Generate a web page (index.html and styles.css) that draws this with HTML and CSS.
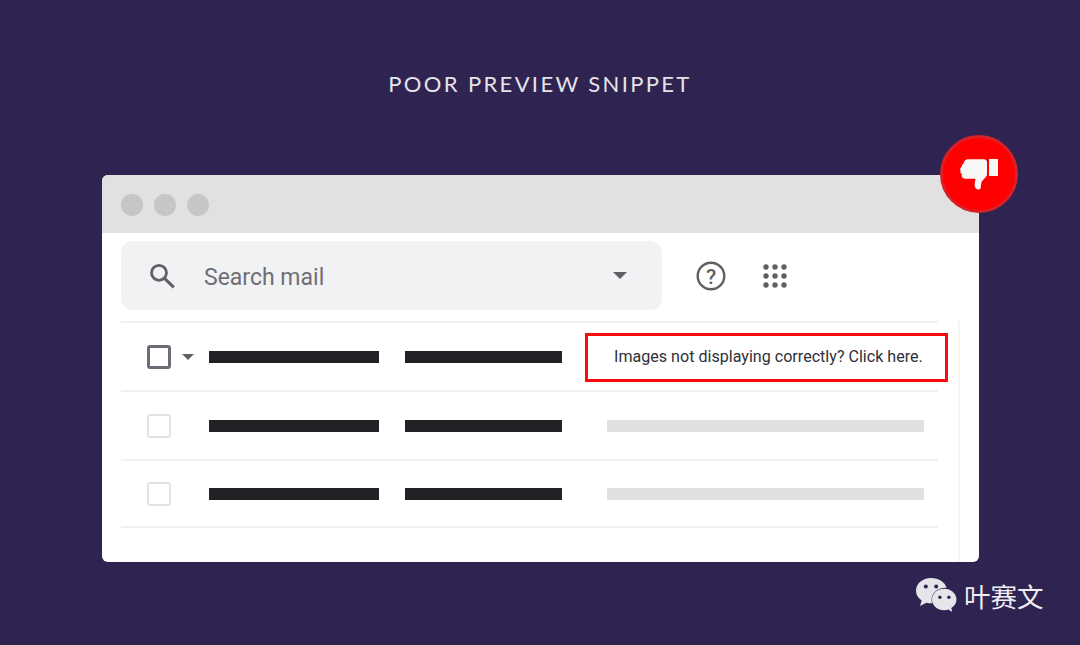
FILE: index.html
```html
<!DOCTYPE html>
<html lang="en">
<head>
<meta charset="utf-8">
<title>Poor preview snippet</title>
<link rel="stylesheet" href="styles.css">
</head>
<body>
<main class="stage">
  <h1 class="title">POOR PREVIEW SNIPPET</h1>
  <section class="window">
    <div class="titlebar">
      <span class="dot"></span><span class="dot"></span><span class="dot"></span>
    </div>
    <div class="toolbar">
      <div class="search">
        <svg class="search-icon" viewBox="0 0 26 26" width="26" height="26"><circle cx="10" cy="9.800" r="7.500" fill="none" stroke="#5f6066" stroke-width="2.800"/><path d="M15.500 15.300L24.800 24.300" stroke="#5f6066" stroke-width="3" fill="none"/></svg>
        <span class="search-text">Search mail</span>
        <span class="caret caret-search"></span>
      </div>
      <svg class="help" viewBox="0 0 30 30" width="30" height="30"><circle cx="15" cy="15" r="13.300" fill="none" stroke="#5f6066" stroke-width="2.400"/><text x="15" y="22.500" text-anchor="middle" class="help-mark">?</text></svg>
      <svg class="apps" viewBox="0 0 24 24" width="24" height="24" fill="#5f6066"><circle cx="3" cy="3" r="2.700"/><circle cx="12" cy="3" r="2.700"/><circle cx="21" cy="3" r="2.700"/><circle cx="3" cy="12" r="2.700"/><circle cx="12" cy="12" r="2.700"/><circle cx="21" cy="12" r="2.700"/><circle cx="3" cy="21" r="2.700"/><circle cx="12" cy="21" r="2.700"/><circle cx="21" cy="21" r="2.700"/></svg>
    </div>
    <div class="list">
      <div class="rows">
        <div class="row row-first">
          <span class="check check-dark"></span>
          <span class="caret caret-row"></span>
          <span class="bar bar-sender"></span>
          <span class="bar bar-subject"></span>
          <div class="callout">Images not displaying correctly? Click here.</div>
        </div>
        <div class="row">
          <span class="check"></span>
          <span class="bar bar-sender"></span>
          <span class="bar bar-subject"></span>
          <span class="bar-grey"></span>
        </div>
        <div class="row">
          <span class="check"></span>
          <span class="bar bar-sender"></span>
          <span class="bar bar-subject"></span>
          <span class="bar-grey"></span>
        </div>
      </div>
      <div class="side"></div>
    </div>
    <div class="badge">
      <svg viewBox="0 0 38 31" width="38" height="31" fill="#f7f7f8"><path d="M8 .3h15.500c2.200 0 3.500 1.200 3.500 3v12.200c0 1-.4 1.800-1.200 2.600l-4.300 4.600-.8 6c-.2 1.500-1.500 2.100-2.800 1.700-2.400-.8-3.400-2.400-3.300-4.700.1-2 .6-4 1-6H5.500c-1.900 0-3.200-.9-3.700-2.200-.3-.9-.1-1.600.2-2.200C.6 14.500 0 13.300.6 12c-.8-1.300-.5-3 .9-4 .1-1.500.8-2.500 2-3.200C4 2.300 5.500.3 8 .3z"/><rect x="29" y="0" width="9" height="17"/></svg>
    </div>
  </section>
  <div class="mark">
    <svg viewBox="0 0 42 38" width="42" height="38"><path fill="#e6e5ea" d="M16 1C7.500 1 1 6.600 1 13.700c0 4 2.200 7.400 5.700 9.800L5 29l6.400-3.300c1.500.4 3 .6 4.600.6h1.200c-.4-1.200-.6-2.400-.6-3.700C16.600 16 22.600 10.700 30.500 10.700h1.100C30 5.200 23.600 1 16 1z"/><path fill="#e6e5ea" d="M41.500 22.500c0-6-5.800-10.700-12.200-10.700-6.800 0-12.300 4.700-12.300 10.700s5.500 10.800 12.300 10.800c1.400 0 2.800-.3 4.100-.7l3.900 2.400-1-3.900c3.300-2.100 5.200-5.100 5.200-8.600z"/><circle cx="10.800" cy="9.500" r="2" fill="#2f2352"/><circle cx="21.200" cy="9.500" r="2" fill="#2f2352"/><circle cx="24.900" cy="20.300" r="1.700" fill="#2f2352"/><circle cx="33.900" cy="20.300" r="1.700" fill="#2f2352"/></svg>
    <span class="mark-name">叶赛文</span>
  </div>
</main>
</body>
</html>
```
FILE: styles.css
```css
* { box-sizing: border-box; }
html, body { margin: 0; padding: 0; }
body {
  width: 1080px;
  height: 645px;
  overflow: hidden;
  background: #2f2352;
  font-family: "Roboto", "Liberation Sans", sans-serif;
}
.stage {
  position: relative;
  width: 1080px;
  height: 645px;
  padding-top: 70px;
}
.title {
  margin: 0;
  height: 28px;
  line-height: 28px;
  text-align: center;
  font-family: "Lato", "Liberation Sans", sans-serif;
  font-weight: 400;
  font-size: 22px;
  letter-spacing: 2.350px;
  color: #e4e3e8;
}
.window {
  position: relative;
  width: 877px;
  height: 387px;
  margin: 77px 0 0 102px;
  background: #fff;
  border-radius: 6px;
}
.titlebar {
  height: 58px;
  display: flex;
  align-items: center;
  gap: 11px;
  padding: 1px 0 0 19px;
  background: #e1e1e1;
  border-radius: 6px 6px 0 0;
}
.dot {
  width: 22px;
  height: 22px;
  border-radius: 50%;
  background: #c6c6c6;
}
.toolbar {
  height: 88px;
  display: flex;
  align-items: flex-start;
  padding: 8px 0 0 19px;
}
.search {
  width: 541px;
  height: 69px;
  display: flex;
  align-items: center;
  padding: 0 35px 0 28px;
  background: #f1f2f4;
  border-radius: 12px;
}
.search-icon { flex: none; }
.search-text {
  margin-left: 29px;
  padding-top: 4px;
  flex: 1;
  font-size: 23px;
  color: #6f6e76;
}
.caret {
  width: 0;
  height: 0;
  border-left: 7px solid transparent;
  border-right: 7px solid transparent;
  border-top: 7px solid #5f6066;
}
.help { margin: 20px 0 0 34px; flex: none; }
.apps { margin: 23px 0 0 37px; flex: none; }
.list {
  display: flex;
  height: 241px;
  padding-left: 19px;
}
.rows {
  width: 817px;
  flex: none;
}
.row {
  height: 69px;
  display: flex;
  align-items: center;
  padding-left: 26px;
  border-top: 2px solid #f0f0f1;
}
.row:last-child { border-bottom: 2px solid #f0f0f1; }
.check {
  flex: none;
  width: 24px;
  height: 24px;
  margin-right: 38px;
  border: 2.500px solid #e2e2e2;
  border-radius: 3px;
}
.check-dark {
  margin-right: 11px;
  border-color: #6d6b78;
  border-width: 3px;
}
.caret-row {
  flex: none;
  margin-right: 15px;
  border-left-width: 6px;
  border-right-width: 6px;
  border-top-width: 6px;
}
.bar {
  flex: none;
  height: 12px;
  background: #212226;
}
.bar-sender { width: 169.500px; margin-right: 26px; }
.bar-subject { width: 157.500px; }
.bar-grey {
  flex: none;
  width: 317px;
  height: 12px;
  margin-left: 45px;
  background: #e0e0e0;
}
.callout {
  flex: none;
  width: 362.500px;
  height: 49px;
  margin: 2px 0 0 23px;
  padding-left: 26px;
  border: 3px solid #fb0a10;
  font-size: 16.100px;
  line-height: 41px;
  color: #2f3038;
  white-space: nowrap;
}
.side {
  width: 2px;
  margin-left: 20px;
  background: #f5f5f6;
}
.badge {
  position: absolute;
  top: -40px;
  right: -39px;
  width: 78px;
  height: 78px;
  display: flex;
  align-items: center;
  justify-content: center;
  background: #ff0000;
  border: 3.500px solid #d91f28;
  border-radius: 50%;
}
.mark {
  position: absolute;
  left: 915px;
  top: 577px;
  display: flex;
  align-items: center;
  gap: 7px;
}
.mark-name {
  font-family: "Noto Sans CJK SC", sans-serif;
  font-size: 26.500px;
  line-height: 38px;
  color: #efeef2;
}
.help-mark {
  font-family: "Roboto", sans-serif;
  font-size: 21px;
  font-weight: 500;
  fill: #5f6066;
}
```
